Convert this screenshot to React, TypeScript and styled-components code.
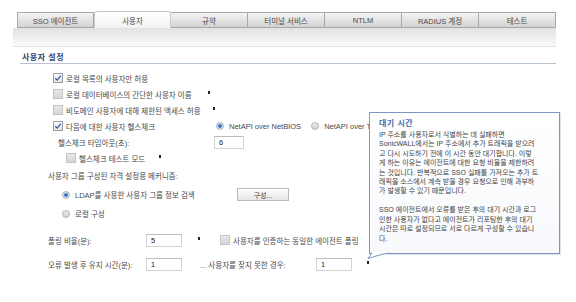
import { FunctionComponent } from "react";
import styled, { createGlobalStyle } from "styled-components";

const GlobalStyle = createGlobalStyle`
  body {
    margin: 0;
    background: #fff;
    font-family: "Liberation Sans", "Noto Sans CJK KR", sans-serif;
    color: #4a4a4a;
  }
`;

const Page = styled.div`
  width: 576px;
  height: 302px;
  padding-top: 12px;
  box-sizing: border-box;
  position: relative;
  overflow: hidden;
`;

const TabBar = styled.div`
  display: flex;
  margin-left: 17px;
  height: 16px;
  align-items: flex-end;
`;

const Tab = styled.div<{ $active?: boolean }>`
  width: 77px;
  height: ${(p) => (p.$active ? "17px" : "16px")};
  box-sizing: border-box;
  display: flex;
  align-items: center;
  justify-content: center;
  font-size: 7.5px;
  color: #4a4a4a;
  border: 1px solid ${(p) => (p.$active ? "#c8c8c8" : "#a9a9a9")};
  border-bottom: ${(p) => (p.$active ? "none" : "1px solid #a9a9a9")};
  border-left-width: ${(p) => (p.$active ? "1px" : "0")};
  border-radius: ${(p) => (p.$active ? "3px 3px 0 0" : "0")};
  background: ${(p) =>
    p.$active
      ? "linear-gradient(#ffffff, #f2f2f2)"
      : "linear-gradient(#f4f4f4, #d2d2d2)"};

  &:first-child {
    border-left-width: 1px;
  }
`;

const Band = styled.div`
  margin-left: 13px;
  width: 543px;
  height: 18px;
  background: linear-gradient(#e2e2e2, #f9f9f9);
  border-bottom: 1px solid #e2e2e2;
`;

const Heading = styled.div`
  margin: 2px 20px 0 20px;
  height: 14px;
  padding-left: 2px;
  display: flex;
  align-items: center;
  font-size: 8px;
  font-weight: bold;
  color: #2d4a76;
  border-bottom: 1px solid #b9c4d3;
  letter-spacing: 0.5px;
`;

const Form = styled.div`
  margin-top: 6px;
  font-size: 7.5px;
  color: #4a4a4a;
`;

const Row = styled.div<{ $h: number; $indent: number }>`
  height: ${(p) => p.$h}px;
  padding-left: ${(p) => p.$indent}px;
  display: flex;
  align-items: center;
  white-space: nowrap;
`;

const Gap = styled.div<{ $top: number }>`
  height: ${(p) => p.$top}px;
`;

const Box = styled.span<{ $checked?: boolean }>`
  width: 10px;
  height: 10px;
  box-sizing: border-box;
  border: 1px solid ${(p) => (p.$checked ? "#9a9ea6" : "#c4c4c4")};
  background: ${(p) =>
    p.$checked ? "linear-gradient(#fbfbfb, #e2e2e2)" : "linear-gradient(#e8e8e8, #d6d6d6)"};
  margin-right: 3px;
  display: inline-flex;
  align-items: center;
  justify-content: center;
  flex-shrink: 0;
`;

const Radio = styled.span<{ $checked?: boolean }>`
  width: 8px;
  height: 8px;
  border-radius: 50%;
  box-sizing: border-box;
  border: 1px solid #b4b4b4;
  background: ${(p) =>
    p.$checked
      ? "radial-gradient(circle, #2f6cc0 0, #4a86d4 1.6px, #dfe6ee 2.4px, #cfd3d8 100%)"
      : "linear-gradient(#eeeeee, #d0d0d0)"};
  margin-right: 5px;
  flex-shrink: 0;
`;

const Label = styled.span<{ $width?: number; $left?: number }>`
  display: inline-block;
  width: ${(p) => (p.$width ? `${p.$width}px` : "auto")};
  margin-left: ${(p) => p.$left ?? 0}px;
`;

const Marker = styled.span<{ $left: number }>`
  width: 2px;
  height: 3px;
  background: #222;
  margin-left: ${(p) => p.$left}px;
  align-self: center;
  transform: translateY(-2px);
`;

const Field = styled.div<{ $width: number }>`
  width: ${(p) => p.$width}px;
  height: 13px;
  box-sizing: border-box;
  border: 1px solid #d2d2d2;
  border-top-color: #bcbcbc;
  background: #fff;
  padding-left: 4px;
  display: flex;
  align-items: center;
  font-size: 7.5px;
  color: #222;
  flex-shrink: 0;
`;

const Button = styled.div`
  width: 52px;
  height: 13px;
  box-sizing: border-box;
  border: 1px solid #b9b9b9;
  background: linear-gradient(#fdfdfd, #e6e6e6);
  display: flex;
  align-items: center;
  justify-content: center;
  color: #444;
  font-size: 7px;
`;

const Option = styled.span<{ $left: number }>`
  display: inline-flex;
  align-items: center;
  margin-left: ${(p) => p.$left}px;
`;

const Tooltip = styled.div`
  position: absolute;
  left: 369px;
  top: 112px;
  width: 191px;
  height: 142px;
  box-sizing: border-box;
  border: 1px solid #7d95c2;
  background: linear-gradient(#ffffff, #f7f9fc);
  box-shadow: 1px 1px 0 rgba(120, 140, 180, 0.25);
  padding: 5px 8px 0 9px;
  font-size: 7px;
  color: #444;
`;

const TipTitle = styled.div`
  font-size: 8px;
  font-weight: bold;
  color: #3a6db4;
  height: 12px;
  line-height: 12px;
  letter-spacing: 0.5px;
`;

const TipBody = styled.div`
  line-height: 9.4px;
  white-space: nowrap;
`;

const TipLine = styled.div<{ $space?: boolean }>`
  height: 9.4px;
  margin-top: ${(p) => (p.$space ? "9.6px" : "0")};
`;

const Tail = styled.svg`
  position: absolute;
  left: 364px;
  top: 251px;
`;

const Check: FunctionComponent = () => (
  <svg width="8" height="8" viewBox="0 0 8 8">
    <path d="M1.3 4.2 L3.2 6.1 L6.8 1.6" fill="none" stroke="#2f62b0" strokeWidth="1.3" />
  </svg>
);

const tabs = ["SSO 에이전트", "사용자", "규약", "터미널 서비스", "NTLM", "RADIUS 계정", "테스트"];

const tipLines = [
  "IP 주소를 사용자로서 식별하는 데 실패하면",
  "SonicWALL에서는 IP 주소에서 추가 트래픽을 받으려",
  "고 다시 시도하기 전에 이 시간 동안 대기합니다. 이렇",
  "게 하는 이유는 에이전트에 대한 요청 비율을 제한하려",
  "는 것입니다. 반복적으로 SSO 실패를 가져오는 추가 트",
  "래픽을 소스에서 계속 받을 경우 요청으로 인해 과부하",
  "가 발생할 수 있기 때문입니다.",
];

const tipLines2 = [
  "SSO 에이전트에서 오류를 받은 후의 대기 시간과 로그",
  "인한 사용자가 없다고 에이전트가 리포팅한 후의 대기",
  "시간은 따로 설정되므로 서로 다르게 구성할 수 있습니",
  "다.",
];

export default function App() {
  return (
    <Page>
      <GlobalStyle />
      <TabBar>
        {tabs.map((t) => (
          <Tab key={t} $active={t === "사용자"}>
            {t}
          </Tab>
        ))}
      </TabBar>
      <Band />
      <Heading>사용자 설정</Heading>

      <Form>
        <Row $h={16} $indent={53}>
          <Box $checked>
            <Check />
          </Box>
          로컬 목록의 사용자만 허용
        </Row>
        <Row $h={16} $indent={53}>
          <Box />
          로컬 데이터베이스의 간단한 사용자 이름
          <Marker $left={16} />
        </Row>
        <Row $h={16} $indent={53}>
          <Box />
          비도메인 사용자에 대해 제한된 액세스 허용
          <Marker $left={12} />
        </Row>
        <Row $h={16} $indent={53}>
          <Box $checked>
            <Check />
          </Box>
          <Label $width={150}>다음에 대한 사용자 헬스체크</Label>
          <Radio $checked />
          NetAPI over NetBIOS
          <Option $left={10}>
            <Radio />
            NetAPI over TCP
          </Option>
        </Row>
        <Row $h={16} $indent={58}>
          <Label $width={156}>헬스체크 타임아웃(초):</Label>
          <Field $width={30}>6</Field>
        </Row>
        <Row $h={16} $indent={66}>
          <Box />
          <Label>헬스체크 테스트 모드</Label>
          <Marker $left={14} />
        </Row>

        <Row $h={19} $indent={48}>
          사용자 그룹 구성된 자격 설정용 메커니즘:
        </Row>
        <Row $h={19} $indent={62}>
          <Radio $checked />
          <Label $width={162}>LDAP를 사용한 사용자 그룹 정보 검색</Label>
          <Button>구성...</Button>
        </Row>
        <Row $h={19} $indent={62}>
          <Radio />
          로컬 구성
        </Row>

        <Gap $top={5} />
        <Row $h={24} $indent={48}>
          <Label $width={98}>폴링 비율(분):</Label>
          <Field $width={36}>5</Field>
          <Marker $left={16} />
          <Option $left={20}>
            <Box />
            사용자를 인증하는 동일한 에이전트 폴링
          </Option>
        </Row>
        <Row $h={24} $indent={48}>
          <Label $width={98}>오류 발생 후 유지 시간(분):</Label>
          <Field $width={36}>1</Field>
          <Label $width={116} $left={18}>
            ... 사용자를 찾지 못한 경우:
          </Label>
          <Field $width={36}>1</Field>
          <Marker $left={15} />
        </Row>
      </Form>

      <Tooltip>
        <TipTitle>대기 시간</TipTitle>
        <TipBody>
          {tipLines.map((l) => (
            <TipLine key={l}>{l}</TipLine>
          ))}
          {tipLines2.map((l, i) => (
            <TipLine key={l} $space={i === 0}>
              {l}
            </TipLine>
          ))}
        </TipBody>
      </Tooltip>
      <Tail width="28" height="10" viewBox="0 0 28 10">
        <path d="M8 2 L4 7.5 L24 1.5" fill="#fff" stroke="#7d95c2" strokeWidth="1" />
        <path d="M8.5 1.5 L23.5 1.5" stroke="#fff" strokeWidth="1.4" />
      </Tail>
    </Page>
  );
}
